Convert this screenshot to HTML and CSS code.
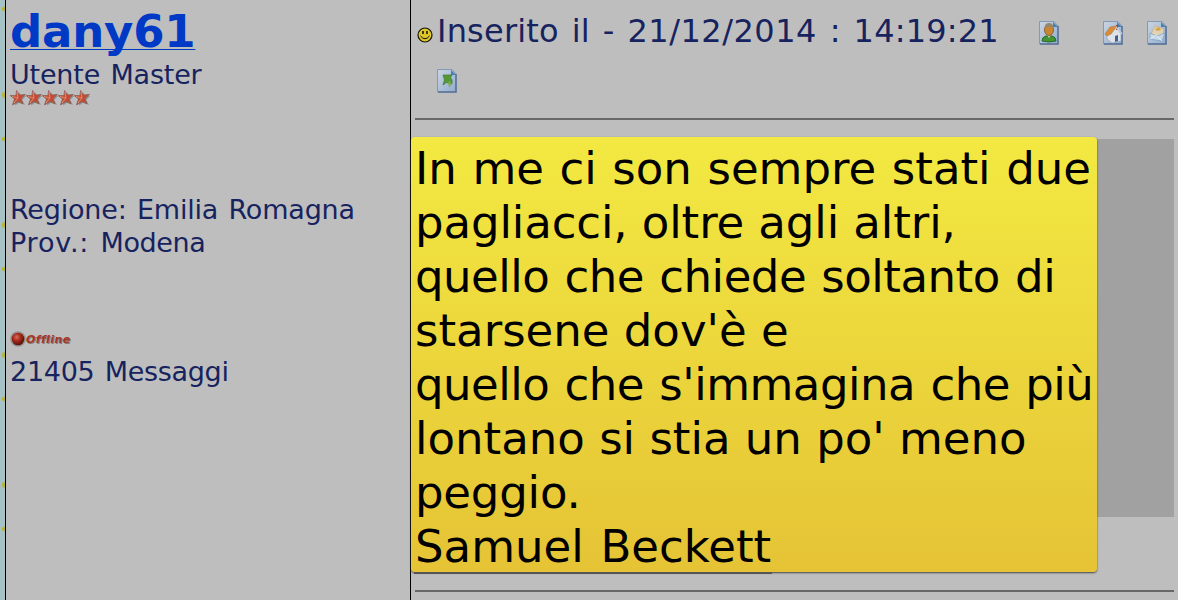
FILE: index.html
```
<!DOCTYPE html>
<html lang="it">
<head>
  <meta charset="UTF-8">
  <title>Forum</title>
  <link rel="stylesheet" href="styles.css">
</head>
<body>
  <svg width="0" height="0" class="defs">
    <defs>
      <linearGradient id="paper" x1="0" y1="0" x2="1" y2="1">
        <stop offset="0" stop-color="#ccd5e0"/>
        <stop offset="1" stop-color="#91acd0"/>
      </linearGradient>
      <radialGradient id="led" cx=".4" cy=".35" r=".65">
        <stop offset="0" stop-color="#d9705c"/>
        <stop offset=".45" stop-color="#a92b1b"/>
        <stop offset="1" stop-color="#57110c"/>
      </radialGradient>
      <symbol id="page" viewBox="0 0 20 24">
        <path d="M.5 .5H15L19 5V23H.5Z" fill="url(#paper)" stroke="#8499b5"/>
        <path d="M19 5V23H1" fill="none" stroke="#586f96" stroke-width="1.500"/>
        <path d="M14 1L19 6H14Z" fill="#4d7fae"/>
      </symbol>
      <symbol id="star" viewBox="0 0 16 16">
        <path d="M9 2L11 6.500L16 6L12 10L15 15L9.500 12.500L5 15.500L6 10L2 7H7Z" fill="#777" opacity=".7"/>
        <path d="M6.500 .5L9.500 5L15.500 4.500L11 8.500L13 14L8 11.500L2.500 15L4.500 9L0 5.500L6 5.500Z" fill="#c64930" stroke="#85645d" stroke-width=".8"/>
        <path d="M7 2L8 8L2 6.500M8 8L4 13" fill="none" stroke="#d99079"/>
      </symbol>
    </defs>
  </svg>

  <div class="post">
    <div class="user">
      <a class="nick">dany61</a>
      <div class="rank">Utente Master</div>
      <div class="stars">
        <svg><use href="#star"/></svg><svg><use href="#star"/></svg><svg><use href="#star"/></svg><svg><use href="#star"/></svg><svg><use href="#star"/></svg>
      </div>
      <div class="place">Regione: Emilia Romagna<br><span class="prov">Prov.: </span><span class="city">Modena</span></div>
      <div class="status">
        <svg width="16" height="16" viewBox="0 0 16 16">
          <circle cx="8" cy="8" r="7.800" fill="#929292"/>
          <circle cx="8" cy="8" r="6.300" fill="url(#led)"/>
        </svg>
        <span>Offline</span>
      </div>
      <div class="count">21405 Messaggi</div>
    </div>

    <div class="message">
      <div class="head">
        <svg class="smile" width="16" height="16" viewBox="0 0 16 16">
          <circle cx="8" cy="8" r="7" fill="#ddc52c" stroke="#151507" stroke-width="1.200"/>
          <path d="M6 4V7M10 4V7" stroke="#111" stroke-width="1.500"/>
          <path d="M3.500 9Q8 14.500 12.500 9" fill="none" stroke="#111"/>
        </svg>
        <span class="date">Inserito il - <span class="day">21/12/2014</span> : 14:19:21</span>
        <svg class="icon profile" viewBox="0 0 20 24">
          <use href="#page"/>
          <path d="M3 20Q3 16 7 15H13Q17 16 17 20Q10 22 3 20Z" fill="#439432" stroke="#286a27"/>
          <path d="M8 14L10 17L12 14Z" fill="#d5c9ae"/>
          <ellipse cx="10" cy="9" rx="4.500" ry="5.500" fill="#c98632" stroke="#8f6834"/>
          <path d="M5.500 7Q6 2 10 2Q14 2 14.500 7Q10 4 5.500 7Z" fill="#96866a"/>
        </svg>
        <svg class="icon home" viewBox="0 0 20 24">
          <use href="#page"/>
          <path d="M4 13L13 6L18 13V20L9 22L4 18Z" fill="#dce2e8" stroke="#8d9fb5" stroke-width=".6"/>
          <path d="M13 4H15V9H13Z" fill="#a4402f"/>
          <path d="M2 13L7 6L14 5L8 13L4 15Z" fill="#d98c38" stroke="#ad7640" stroke-width=".6"/>
          <path d="M13 6L19 13" stroke="#c7d0da" stroke-width="1.500"/>
          <path d="M12 15L15 14V20L12 21Z" fill="#455f86"/>
        </svg>
        <svg class="icon mail" viewBox="0 0 20 24">
          <use href="#page"/>
          <path d="M4 13L8 5L17 8L16 15L10 17Z" fill="#e2d2b4" stroke="#bda27a" stroke-width=".6"/>
          <path d="M8 8L12 6L14 9L10 10Z" fill="#d8a640"/>
          <path d="M3 12L10 15L18 12L15 20L3 18Z" fill="#c3d9e8" stroke="#7b9fc0" stroke-width=".7"/>
          <path d="M3 18L9 14L15 20" fill="none" stroke="#edf0f1" stroke-width=".8"/>
        </svg>
      </div>
      <svg class="icon quote" viewBox="0 0 20 24">
        <use href="#page"/>
        <path d="M6 6H15L13.500 8.500L15 11V15H12L10 13L6 16L7.500 11Z" fill="#559838" stroke="#3b7b2b" stroke-width=".7"/>
        <path d="M12.500 12V18M10.500 14.500H14.500" stroke="#80aa42" stroke-width="1.500"/>
      </svg>
      <hr>
      <div class="selection">
        <div class="quote-box">
          <div class="line l1">In me ci son sempre stati due</div>
          <div class="line l2">pagliacci, oltre agli altri,</div>
          <div class="line l3">quello che chiede soltanto di</div>
          <div class="line l4">starsene dov'è e</div>
          <div class="line l5">quello che s'immagina che più</div>
          <div class="line l6">lontano si stia un po' meno</div>
          <div class="line l7">peggio.</div>
          <div class="line l8">Samuel Beckett</div>
        </div>
      </div>
      <hr class="bottom">
    </div>
  </div>
</body>
</html>
```
FILE: styles.css
```
* {
  box-sizing: border-box;
}

body {
  margin: 0;
  height: 600px;
  overflow: hidden;
  font-family: Verdana, "DejaVu Sans", sans-serif;
  color: #17235f;
  /* starry strip on the left, repeats every 130px */
  background:
    radial-gradient(ellipse 3px 4px at 4px 95px, #b9b52e 45%, transparent 90%) 0 0 / 5px 130px repeat-y,
    radial-gradient(ellipse 3px 3px at 4px 9px, #b9b52e 50%, transparent 90%) 0 0 / 5px 130px repeat-y,
    #a7c2c4;
}

.defs {
  position: absolute;
}

.post {
  display: grid;
  grid-template-columns: 405px 768px;
  height: 600px;
  margin-left: 5px;
  background: #bebebe;
}

svg {
  display: block;
  flex: none;
}

.user {
  border-left: 1px solid #000;
  padding: 4px 0 0 4px;
}

.nick {
  display: block;
  width: 186px;
  height: 54px;
  line-height: 56px;
  font-size: 45px;
  font-weight: bold;
  letter-spacing: -0.2px;
  color: #0039c6;
  white-space: nowrap;
  text-decoration: underline;
  text-decoration-thickness: 1px;
  text-underline-offset: 2px;
  text-decoration-skip-ink: none;
}

.rank, .place, .count {
  font-size: 27px;
  line-height: 33px;
  letter-spacing: -0.2px;
  word-spacing: 2px;
}

.rank {
  height: 32px;
}

.stars {
  display: flex;
  height: 16px;
}

.stars svg {
  width: 16px;
  height: 16px;
}

.place {
  margin-top: 87px;
}

.prov {
  letter-spacing: 0.8px;
}

.city {
  letter-spacing: -0.4px;
}

.status {
  display: flex;
  align-items: center;
  height: 16px;
  margin-top: 72px;
  font-size: 11px;
  font-weight: bold;
  font-style: italic;
  letter-spacing: 0.4px;
  color: #a53626;
  text-shadow: 1px 1px 0 #887a78;
}

.count {
  margin-top: 8px;
  letter-spacing: -0.3px;
}

.message {
  border-left: 1px solid #000;
  padding-top: 12px;
}

.head {
  display: flex;
  height: 40px;
  padding-left: 6px;
}

.smile {
  margin-top: 15px;
}

.date {
  width: 602px;
  margin-left: 4px;
  font-size: 32px;
  line-height: 39px;
  letter-spacing: 0.2px;
  white-space: nowrap;
  word-spacing: 2.5px;
}

.day {
  letter-spacing: 0.5px;
}

.icon {
  width: 20px;
  height: 24px;
}

.profile, .home, .mail {
  margin-top: 9px;
}

.home {
  margin-left: 44px;
}

.mail {
  margin-left: 24px;
}

.quote {
  margin: 17px 0 0 26px;
}

hr {
  height: 2px;
  margin: 25px 4px 0;
  border: 0;
  background: #686868;
}

.selection {
  height: 378px;
  margin: 19px 4px 0;
  background: #a1a1a1;
}

.quote-box {
  position: relative;
  top: -2px;
  left: -4px;
  width: 686px;
  height: 435px;
  padding: 5px 0 0 4px;
  border-radius: 4px;
  color: #000;
  background: linear-gradient(#f3e942, #e5c335);
  box-shadow: 0 1px 2px #444;
}

/* darker edge under the last line */
.quote-box::after {
  content: "";
  position: absolute;
  left: 3px;
  bottom: -2px;
  width: 358px;
  height: 2px;
  background: #555;
}

.line {
  height: 54px;
  font-size: 45px;
  line-height: 54px;
  white-space: nowrap;
}

.l1 {
  word-spacing: 1.3px;
}

.l2 {
  letter-spacing: -0.1px;
}

.l3, .l5 {
  letter-spacing: -0.5px;
  word-spacing: 1.5px;
}

.l7 {
  letter-spacing: -0.2px;
}

.l8 {
  word-spacing: 2.5px;
}

.bottom {
  margin-top: 73px;
}
```
